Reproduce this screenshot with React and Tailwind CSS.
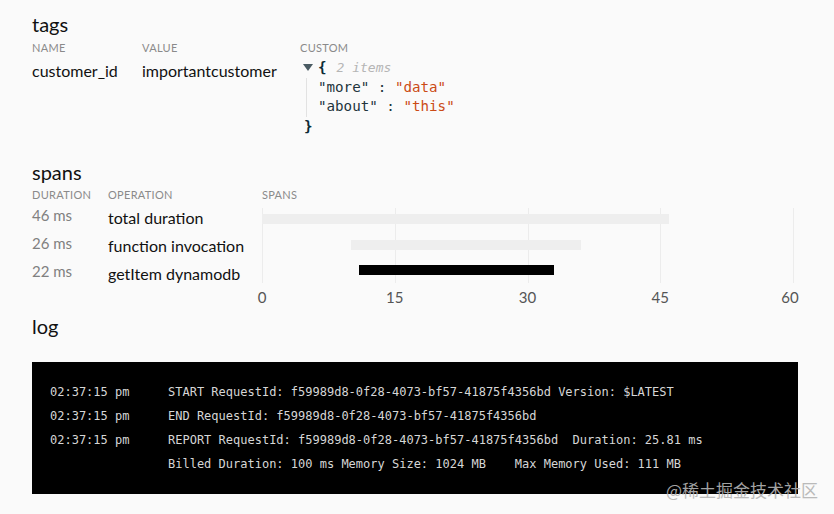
import React from 'react';

const SANS = { fontFamily: 'Lato, "Noto Sans", sans-serif' };
const MONO = { fontFamily: '"DejaVu Sans Mono", "Liberation Mono", monospace' };

const SPANS = [
  { dur: '46 ms', op: 'total duration', start: 0, len: 46, bar: 'bg-[#eeeeee]' },
  { dur: '26 ms', op: 'function invocation', start: 10, len: 26, bar: 'bg-[#eeeeee]' },
  { dur: '22 ms', op: 'getItem dynamodb', start: 11, len: 22, bar: 'bg-black' },
];

const TICKS = [0, 15, 30, 45, 60];
const MAX = 60;

const LOGS = [
  { time: '02:37:15 pm', msg: 'START RequestId: f59989d8-0f28-4073-bf57-41875f4356bd Version: $LATEST' },
  { time: '02:37:15 pm', msg: 'END RequestId: f59989d8-0f28-4073-bf57-41875f4356bd' },
  { time: '02:37:15 pm', msg: 'REPORT RequestId: f59989d8-0f28-4073-bf57-41875f4356bd  Duration: 25.81 ms' },
  { time: '', msg: 'Billed Duration: 100 ms Memory Size: 1024 MB    Max Memory Used: 111 MB' },
];

function Heading({ children, className = '' }) {
  return <h2 className={`text-[20px] leading-[24px] text-[#111] ${className}`}>{children}</h2>;
}

function ColHead({ children, className = '' }) {
  return <div className={`text-[11px] leading-[14px] uppercase tracking-[0.3px] text-[#8a8a8a] ${className}`}>{children}</div>;
}

function JsonView() {
  return (
    <div className="text-[14.2px] leading-[19.5px]" style={MONO}>
      <div className="flex items-center">
        <svg width="10" height="8" viewBox="0 0 10 8" className="ml-[3px] mr-[5px]">
          <path d="M0 0 L10 0 L5 7 Z" fill="#4a5b63" />
        </svg>
        <span className="font-bold text-[#0b2b36]">{'{'}</span>
        <span className="ml-[10px] italic text-[13px] text-[#b5b5b5]">2 items</span>
      </div>
      <div className="ml-[6px] border-l border-[#e2e2e2] pl-[11px] text-[#22343c]">
        <div className="whitespace-pre">
          "more" : <span className="text-[#cb4b16]">"data"</span>
        </div>
        <div className="whitespace-pre">
          "about" : <span className="text-[#cb4b16]">"this"</span>
        </div>
      </div>
      <div className="ml-[4px] font-bold text-[#0b2b36]">{'}'}</div>
    </div>
  );
}

export default function App() {
  return (
    <div className="relative w-[834px] h-[514px] overflow-hidden bg-[#fafafa] px-[32px] pt-[12px]" style={SANS}>
      {/* tags */}
      <Heading>tags</Heading>
      <div className="mt-[5px] flex">
        <ColHead className="w-[110px]">Name</ColHead>
        <ColHead className="w-[158px]">Value</ColHead>
        <ColHead>Custom</ColHead>
      </div>
      <div className="mt-[3px] flex items-start text-[16px] leading-[20px] text-[#111]">
        <div className="w-[110px] pt-[3px]">customer_id</div>
        <div className="w-[158px] pt-[3px]">importantcustomer</div>
        <JsonView />
      </div>

      {/* spans */}
      <Heading className="mt-[24px]">spans</Heading>
      <div className="mt-[4px] flex">
        <div className="w-[230px]">
          <div className="flex">
            <ColHead className="w-[76px]">Duration</ColHead>
            <ColHead>Operation</ColHead>
          </div>
          <div className="mt-[2px]">
            {SPANS.map((s) => (
              <div key={s.op} className="flex items-center h-[28px]">
                <span className="w-[76px] mb-[6px] text-[15px] text-[#808080]">{s.dur}</span>
                <span className="text-[16px] text-[#111]">{s.op}</span>
              </div>
            ))}
          </div>
        </div>
        <div className="w-[531px]">
          <ColHead>Spans</ColHead>
          <div className="relative mt-[6px] h-[75px] pt-[6px] flex flex-col gap-[15.5px]">
            {TICKS.map((t) => (
              <div
                key={t}
                className="absolute top-0 bottom-0 w-px bg-[#ececec]"
                style={{ left: `${(t / MAX) * 100}%` }}
              />
            ))}
            {SPANS.map((s) => (
              <div key={s.op} className="relative h-[10px]">
                <div
                  className={`absolute top-0 h-[10px] ${s.bar}`}
                  style={{ left: `${(s.start / MAX) * 100}%`, width: `${(s.len / MAX) * 100}%` }}
                />
              </div>
            ))}
          </div>
          <div className="relative mt-[6px] h-[16px] text-[15px] leading-[16px] text-[#555]">
            {TICKS.map((t) => (
              <span
                key={t}
                className="absolute top-0 -translate-x-1/2"
                style={{ left: `calc(${(t / MAX) * 100}% - ${t === MAX ? 3 : 0}px)` }}
              >
                {t}
              </span>
            ))}
          </div>
        </div>
      </div>

      {/* log */}
      <Heading className="mt-[9px]">log</Heading>
      <div className="mt-[24px] w-[766px] bg-black px-[18px] py-[18px] text-[12px] leading-[24px] text-[#d6d6d6]" style={MONO}>
        {LOGS.map((l, i) => (
          <div key={i} className="flex whitespace-pre">
            <span className="w-[118px] shrink-0">{l.time}</span>
            <span>{l.msg}</span>
          </div>
        ))}
      </div>

      <div
        className="absolute right-[16px] bottom-[14px] text-[17px] leading-[20px] text-[#b4b4b4] opacity-90"
        style={{ fontFamily: '"Noto Sans CJK SC", "Noto Sans", sans-serif' }}
      >
        @稀土掘金技术社区
      </div>
    </div>
  );
}
